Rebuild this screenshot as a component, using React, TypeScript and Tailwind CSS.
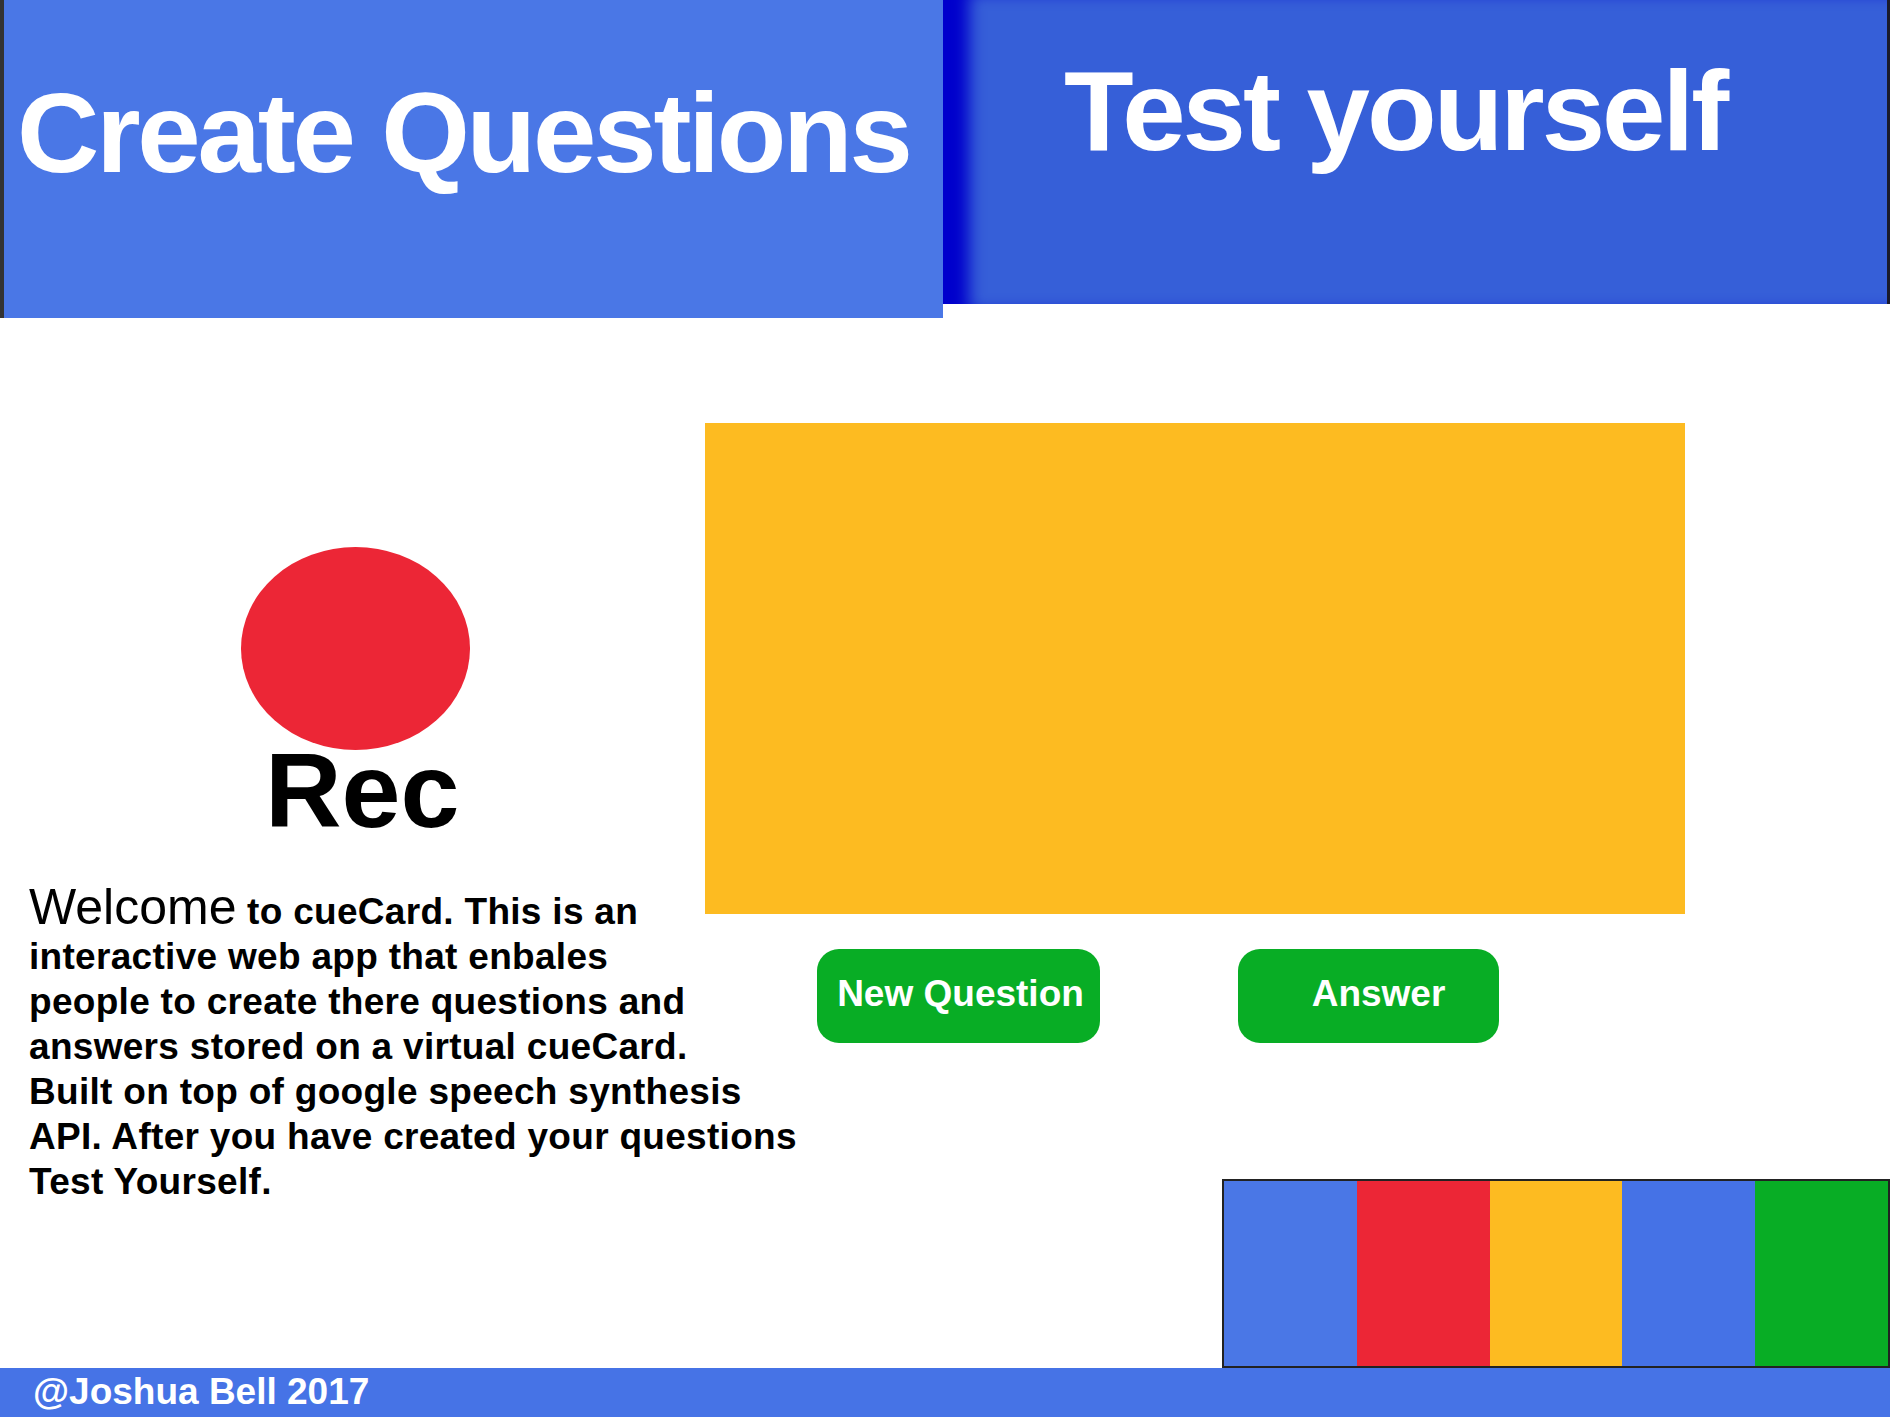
import React from "react";

const FONT = { fontFamily: '"Liberation Sans", Arial, sans-serif' };

const STRIPES = ["bg-[#4a77e6]", "bg-[#ec2636]", "bg-[#fdbb21]", "bg-[#4572e6]", "bg-[#08ad25]"];

function Header() {
    return (
        <div className="flex items-start">
            {/* Create Questions tab */}
            <div className="w-[943px] h-[318px] shrink-0 bg-[#4a77e6] border-l-4 border-[#333333] pl-[13px] pt-[76px]">
                <div className="text-white font-bold text-[114px] leading-[114px] tracking-[-3.2px] whitespace-nowrap">
                    Create Questions
                </div>
            </div>

            {/* Test yourself tab */}
            <div className="flex-1 h-[304px] bg-[#365fd8] border-r-[3px] border-[#1a1a2a] pl-[121px] pt-[54px] shadow-[inset_34px_0_16px_-8px_#0000cc]">
                <div className="text-white font-bold text-[114px] leading-[114px] tracking-[-3px] whitespace-nowrap">
                    Test yourself
                </div>
            </div>
        </div>
    );
}

function RecPanel() {
    return (
        <div className="w-[705px] shrink-0 pt-[229px]">
            <div className="ml-[241px] w-[229px] h-[203px] rounded-[50%] bg-[#ec2636]" />
            <div className="ml-[265px] text-black font-bold text-[106px] leading-[80px]">Rec</div>

            <p className="ml-[29px] mt-[55px] text-black font-bold text-[37px] leading-[45px] tracking-[0.3px] whitespace-nowrap">
                <span className="font-light text-[50px] tracking-normal">Welcome</span> to cueCard. This is an
                <br />
                interactive web app that enbales
                <br />
                people to create there questions and
                <br />
                answers stored on a virtual cueCard.
                <br />
                Built on top of google speech synthesis
                <br />
                API. After you have created your questions
                <br />
                Test Yourself.
            </p>
        </div>
    );
}

function CardPanel() {
    return (
        <div className="flex-1 flex flex-col pt-[105px]">
            <div className="w-[980px] h-[491px] bg-[#fdbb21]" />

            <div className="flex mt-[35px] pl-[112px] gap-[138px]">
                <button className="w-[283px] h-[94px] rounded-[22px] bg-[#08ad25] text-white font-bold text-[37px] flex items-center justify-center pb-[4px] pl-[4px]">
                    New Question
                </button>
                <button className="w-[261px] h-[94px] rounded-[22px] bg-[#08ad25] text-white font-bold text-[37px] flex items-center justify-center pl-[20px] pb-[4px]">
                    Answer
                </button>
            </div>

            {/* colour strip */}
            <div className="mt-auto ml-auto w-[668px] h-[189px] border-2 border-[#222222] flex">
                {STRIPES.map((c, i) => (
                    <div key={i} className={`flex-1 ${c}`} />
                ))}
            </div>
        </div>
    );
}

export default function App() {
    return (
        <div className="w-[1890px] h-[1417px] bg-white flex flex-col overflow-hidden" style={FONT}>
            <Header />
            <div className="flex flex-1">
                <RecPanel />
                <CardPanel />
            </div>
            <footer className="h-[49px] shrink-0 bg-[#4673e6] pl-[33px]">
                <div className="text-white font-bold text-[37px] leading-[48px]">@Joshua Bell 2017</div>
            </footer>
        </div>
    );
}
